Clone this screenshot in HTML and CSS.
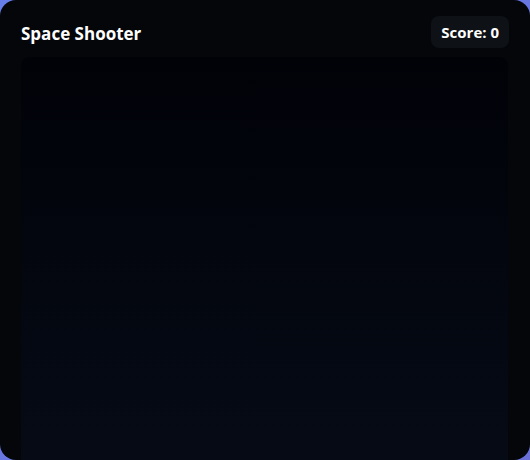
FILE: index.html
```html
<!DOCTYPE html>
<html>
<head>
<meta charset="utf-8">
<link rel="stylesheet" href="styles.css">
</head>
<body>
<div class="card">
  <div class="header">
    <h1 class="title">Space Shooter</h1>
    <div class="score">Score: 0</div>
  </div>
  <div class="canvas"></div>
</div>
</body>
</html>
```
FILE: styles.css
```css
html, body {
  margin: 0;
  padding: 0;
  background: linear-gradient(135deg, #667eea 0%, #6a6fd8 100%);
}
body {
  width: 530px;
  height: 460px;
  overflow: hidden;
}
.card {
  box-sizing: border-box;
  width: 530px;
  height: 460px;
  background: #04060a;
  border-radius: 16px;
  padding: 16px 21px 0 21px;
  overflow: hidden;
  display: flex;
  flex-direction: column;
  font-family: "Open Sans", "Noto Sans", sans-serif;
}
.header {
  display: flex;
  justify-content: space-between;
  align-items: center;
  height: 32px;
  margin-bottom: 9px;
}
.title {
  margin: 0;
  font-size: 17px;
  font-weight: 700;
  color: #ffffff;
  position: relative;
  top: 1px;
}
.score {
  box-sizing: border-box;
  height: 32px;
  padding: 0 10px;
  display: flex;
  align-items: center;
  background: #0e1116;
  border-radius: 8px;
  font-size: 15px;
  font-weight: 700;
  color: #ffffff;
  margin-right: 0;
}
.canvas {
  flex: none;
  width: 487px;
  height: 480px;
  border-radius: 8px 8px 0 0;
  background: linear-gradient(180deg, #010208 0%, #060c18 100%);
}
```
